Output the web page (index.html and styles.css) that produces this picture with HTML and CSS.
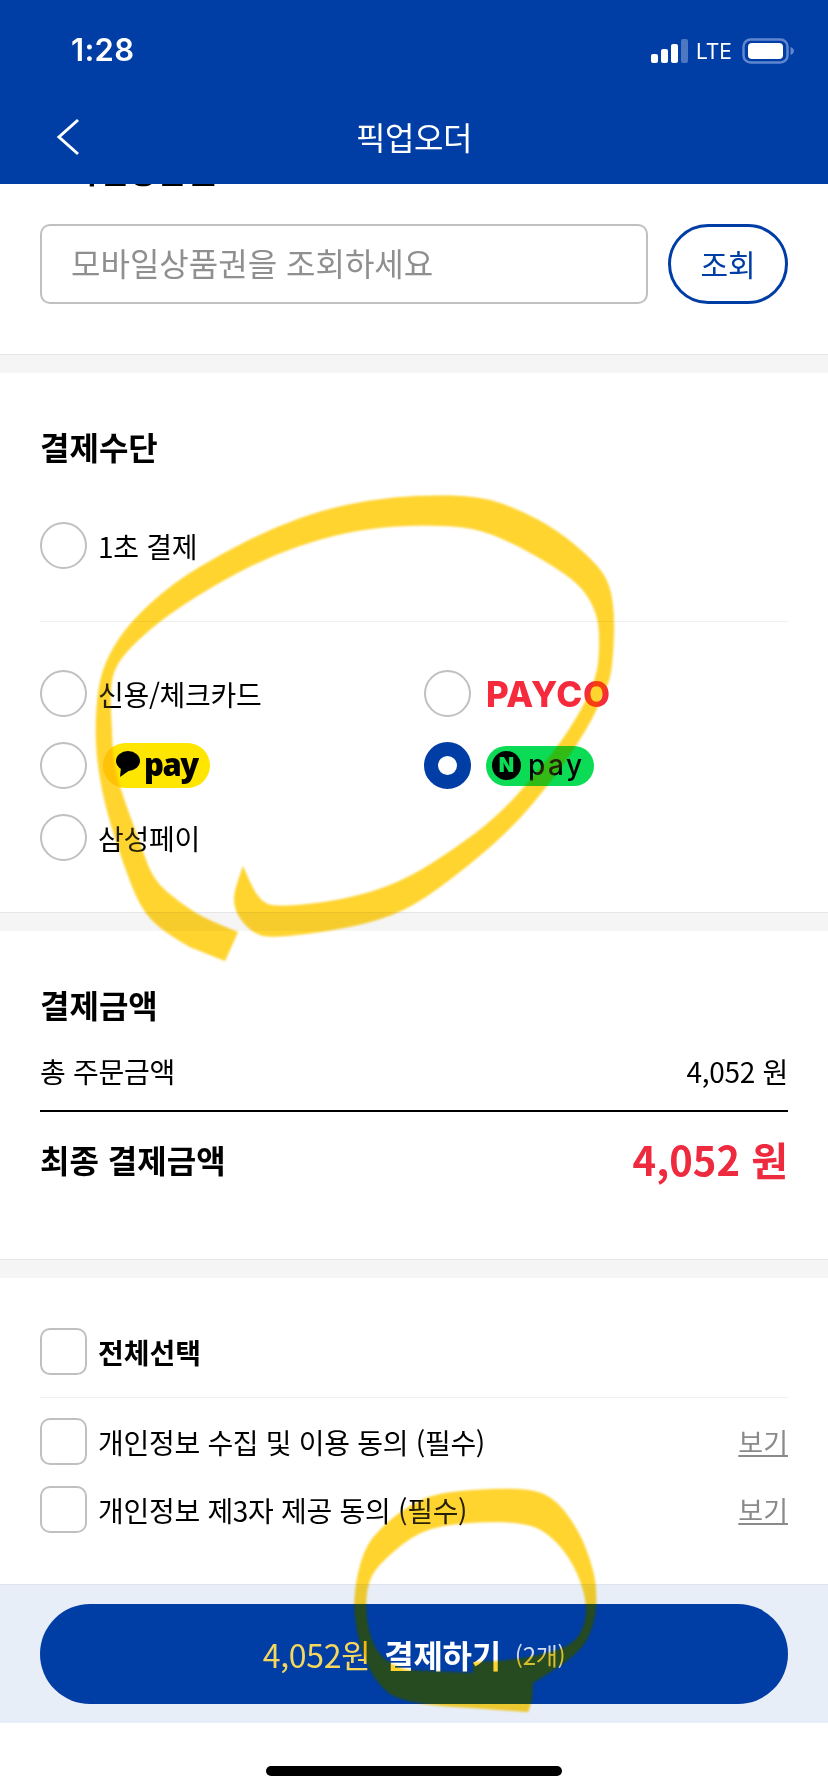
FILE: index.html
```html
<!DOCTYPE html>
<html lang="ko">
<head>
    <meta charset="UTF-8">
    <meta name="viewport" content="width=device-width, initial-scale=1.0">
    <title>픽업오더</title>
    <link rel="stylesheet" href="styles.css">
</head>
<body>
<div class="page">
    <header class="top">
        <div class="status">
            <span class="time">1:28</span>
            <div class="status-right">
                <svg class="signal" width="37" height="24" viewBox="0 0 37 24">
                    <rect x="0" y="15" width="7" height="9" rx="2" fill="#fff"/>
                    <rect x="10" y="10" width="7" height="14" rx="2" fill="#fff"/>
                    <rect x="20" y="5" width="7" height="19" rx="2" fill="#fff"/>
                    <rect x="30" y="0" width="7" height="24" rx="2" fill="#fff" opacity=".3"/>
                </svg>
                <span class="lte">LTE</span>
                <svg class="battery" width="52" height="26" viewBox="0 0 52 26">
                    <rect x="1.5" y="1.5" width="44" height="23" rx="7" fill="none" stroke="#5f86cf" stroke-width="2.5"/>
                    <rect x="6" y="5" width="35" height="16" rx="4" fill="#fff"/>
                    <path d="M48.5 9 C51 10 52 11.500 52 13 C52 14.500 51 16 48.500 17 Z" fill="#5f86cf"/>
                </svg>
            </div>
        </div>
        <nav class="nav">
            <svg class="back" width="24" height="38" viewBox="0 0 24 38">
                <path d="M22 2 L3 19 L22 36" fill="none" stroke="#fff" stroke-width="3"/>
            </svg>
            <h1>픽업오더</h1>
        </nav>
    </header>

    <section class="coupon">
        <h2 class="coupon-title">모바일상품권</h2>
        <div class="coupon-row">
            <div class="coupon-input">모바일상품권을 조회하세요</div>
            <button class="coupon-btn" type="button">조회</button>
        </div>
    </section>
    <div class="gap"></div>

    <section class="pay">
        <h2>결제수단</h2>
        <div class="opt opt-first"><span class="radio"></span>1초 결제</div>
        <div class="pay-grid">
            <div class="opt"><span class="radio"></span>신용/체크카드</div>
            <div class="opt"><span class="radio"></span><span class="payco">PAYCO</span></div>
            <div class="opt">
                <span class="radio"></span>
                <span class="kakao">
                    <svg width="24" height="26" viewBox="0 0 24 26">
                        <ellipse cx="12" cy="10" rx="12" ry="10" fill="#000"/>
                        <path d="M5 16 L4 26 L14 19 Z" fill="#000"/>
                    </svg>
                    pay
                </span>
            </div>
            <div class="opt">
                <span class="radio on"></span>
                <span class="npay"><span class="npay-n">N</span>pay</span>
            </div>
            <div class="opt"><span class="radio"></span>삼성페이</div>
        </div>
    </section>
    <div class="gap"></div>

    <section class="amount">
        <h2>결제금액</h2>
        <div class="amount-row"><span>총 주문금액</span><span>4,052 원</span></div>
        <div class="amount-final"><strong>최종 결제금액</strong><span class="final-price">4,052 원</span></div>
    </section>
    <div class="gap"></div>

    <section class="terms">
        <div class="opt opt-all"><span class="check"></span><strong>전체선택</strong></div>
        <div class="term"><div class="opt"><span class="check"></span>개인정보 수집 및 이용 동의 (필수)</div><a class="term-link">보기</a></div>
        <div class="term"><div class="opt"><span class="check"></span>개인정보 제3자 제공 동의 (필수)</div><a class="term-link">보기</a></div>
    </section>

    <footer class="foot">
        <button class="pay-btn" type="button">
            <span class="pay-sum">4,052원</span>
            <strong>결제하기</strong>
            <span class="pay-count">(2개)</span>
        </button>
    </footer>
    <div class="home"><span class="home-bar"></span></div>

    <!-- highlighter scribbles drawn over the screenshot -->
    <svg class="marker" width="828" height="1792" viewBox="0 0 828 1792">
        <defs>
            <filter id="soft" color-interpolation-filters="sRGB">
                <feGaussianBlur stdDeviation="1"/>
            </filter>
        </defs>
        <g id="scribbles" filter="url(#soft)" fill="#ffd42f">
            <path d="M225 961 L190 947 Q160 930 150 918 Q140 907 131.500 885 Q123 863 115 838 Q107 813 102.500 791.500 Q98 770 96.500 750 Q95 730 96.500 708.500 Q98 687 102.500 672 Q107 657 118.500 639.500 Q130 622 151.500 602.500 Q173 583 198 568 Q223 553 248 540.500 Q273 528 298 519 Q323 510 346.500 505 Q370 500 395 497.500 Q420 495 450 495.500 Q480 496 500 503 Q520 510 538.500 520 Q557 530 575 545 Q593 560 601.500 571.500 Q610 583 612.500 601.500 Q615 620 613.500 645 Q612 670 609.500 678.500 Q607 687 597 708.500 Q587 730 568.500 756.500 Q550 783 531.500 805 Q513 827 490 847 Q467 867 440 887 Q413 907 391.500 915 Q370 923 346.500 927.500 Q323 932 296.500 935 Q270 938 261.500 935.500 Q253 933 245.500 925 Q238 917 235.500 908.500 Q233 900 235 891.500 Q237 883 243 866 Q250 883 255 891.500 Q260 900 266.500 903.500 Q273 907 298 905 Q323 903 346.500 898 Q370 893 390 885 Q410 877 431.500 863.500 Q453 850 475 833.500 Q497 817 517 795 Q537 773 553.500 751.500 Q570 730 583.500 705 Q597 680 598.500 660 Q600 640 598.500 626.500 Q597 613 590 600.500 Q583 588 570 578 Q557 568 535 555.500 Q513 543 493 535 Q473 527 446.500 526 Q420 525 395 526.500 Q370 528 346.500 533 Q323 538 298 546.500 Q273 555 248 567.500 Q223 580 195 597.500 Q167 615 148.500 631 Q130 647 121.500 658.500 Q113 670 111.500 683.500 Q110 697 111 713.500 Q112 730 112.500 746.500 Q113 763 118 780 Q123 797 131.500 820 Q140 843 146.500 861.500 Q153 880 166.500 891.500 Q180 903 193.500 911.500 Q207 920 238 932 Z"/>
            <path fill-rule="evenodd" d="M528 1712 L473 1708 Q403 1705 388 1692.500 Q373 1680 365 1658.500 Q357 1637 355 1617 Q353 1597 358 1573.500 Q363 1550 373 1537.500 Q383 1525 401.500 1511.500 Q420 1498 440 1494 Q460 1490 495 1489 Q530 1488 543.500 1494 Q557 1500 568.500 1516.500 Q580 1533 586 1549 Q592 1565 594.500 1577.500 Q597 1590 596 1606.500 Q595 1623 587.500 1638 Q580 1653 556.500 1668 L533 1683 L532 1700 Z M497 1522 Q527 1522 540 1529.500 Q553 1537 563 1550 Q573 1563 579 1578 Q585 1593 586 1606.500 Q587 1620 580 1633.500 Q573 1647 545 1653.500 Q517 1660 495 1661 L473 1662 L473 1673 L407 1670 Q390 1665 381.500 1656 Q373 1647 369 1630 Q365 1613 366.500 1596.500 Q368 1580 375.500 1570 Q383 1560 401.500 1545 Q420 1530 443.500 1526 Q467 1522 497 1522 Z"/>
        </g>
    </svg>
    <svg class="marker-top" width="828" height="1792" viewBox="0 0 828 1792">
        <use href="#scribbles"/>
    </svg>
</div>
</body>
</html>
```

FILE: styles.css
```css
* {
    box-sizing: border-box;
}
body {
    margin: 0;
    background-color: #fff;
    font-family: "Noto Sans CJK KR", "Noto Sans", sans-serif;
    color: #000;
}
h1, h2 {
    margin: 0;
}
.page {
    position: relative;
    width: 828px;
    height: 1792px;
    overflow: hidden;
    display: flex;
    flex-direction: column;
}

/* header */
.top {
    position: relative;
    z-index: 1;
    height: 184px;
    flex: none;
    background-color: #003da5;
    color: #fff;
}
.status {
    height: 100px;
    padding: 36px 34px 0 71px;
    display: flex;
    justify-content: space-between;
    align-items: flex-start;
}
.time {
    font-family: Inter, sans-serif;
    font-size: 31px;
    font-weight: 600;
    letter-spacing: .3px;
    line-height: 28px;
}
.status-right {
    display: flex;
    align-items: center;
    gap: 10px;
    margin-top: 1px;
}
.lte {
    font-family: Inter, sans-serif;
    font-size: 21px;
    line-height: 26px;
    margin: 2px 0 0 -2px;
}
.nav {
    height: 84px;
    padding: 0 56px;
    display: grid;
    grid-template-columns: 1fr auto 1fr;
    align-items: center;
}
.nav h1 {
    font-size: 32px;
    font-weight: 400;
    letter-spacing: -.5px;
    margin-top: -12px;
}
.back {
    margin-top: -10px;
}

/* coupon */
.coupon {
    height: 170px;
    flex: none;
    padding: 0 40px;
}
.coupon-title {
    font-size: 32px;
    line-height: 32px;
    margin-top: -31px;
    margin-bottom: 39px;
}
.coupon-row {
    display: flex;
    gap: 20px;
}
.coupon-input {
    width: 608px;
    height: 80px;
    padding-left: 29px;
    border: 2px solid #c0c0c0;
    border-radius: 10px;
    font-size: 32px;
    line-height: 72px;
    color: #8f8f8f;
}
.coupon-btn {
    width: 120px;
    height: 80px;
    background-color: #fff;
    border: 3px solid #003da5;
    border-radius: 40px;
    font-family: inherit;
    font-size: 30px;
    padding: 0 0 3px;
    color: #003da5;
}
.gap {
    height: 19px;
    flex: none;
    background-color: #f5f5f5;
    border-top: 1px solid #e6e6e6;
}

/* options */
.opt {
    display: flex;
    align-items: center;
    gap: 11px;
    font-size: 28px;
    letter-spacing: -.3px;
    height: 47px;
}
.radio {
    flex: none;
    width: 47px;
    height: 47px;
    border: 2px solid #c0c0c0;
    border-radius: 50%;
}
.radio.on {
    border: 14px solid #003da5;
}
.check {
    flex: none;
    width: 47px;
    height: 47px;
    border: 2px solid #c0c0c0;
    border-radius: 10px;
}
.pay {
    height: 539px;
    flex: none;
    padding: 53px 40px 0;
}
.pay h2, .amount h2 {
    font-size: 32px;
    line-height: 40px;
}
.opt-first {
    margin-top: 56px;
}
.pay-grid {
    margin-top: 52px;
    padding-top: 48px;
    border-top: 1px solid #f0f0f0;
    display: grid;
    grid-template-columns: 384px 1fr;
    row-gap: 25px;
}
.payco {
    font-family: Inter, sans-serif;
    font-size: 35px;
    font-weight: 800;
    letter-spacing: .6px;
    color: #f52b3d;
    margin-left: 4px;
}
.kakao {
    display: flex;
    align-items: center;
    gap: 4px;
    height: 45px;
    width: 107px;
    padding: 0 0 3px 13px;
    margin-left: 5px;
    border-radius: 23px;
    background-color: #ffe600;
    font-family: "Open Sans", sans-serif;
    font-size: 31px;
    font-weight: 800;
    letter-spacing: -1.5px;
    line-height: 1;
}
.npay {
    display: flex;
    align-items: center;
    gap: 7px;
    height: 40px;
    width: 108px;
    padding: 0 0 2px 6px;
    margin-left: 4px;
    border-radius: 20px;
    background-color: #0cdc55;
    font-family: Inter, sans-serif;
    font-size: 28px;
    font-weight: 500;
    letter-spacing: 2.5px;
    line-height: 1;
}
.npay-n {
    width: 29px;
    height: 29px;
    border-radius: 50%;
    background-color: #000;
    color: #0cdc55;
    font-size: 20px;
    font-weight: 900;
    letter-spacing: 0;
    line-height: 29px;
    text-align: center;
    margin-top: 2px;
}

/* amount */
.amount {
    height: 328px;
    flex: none;
    padding: 53px 40px 0;
}
.amount-row {
    display: flex;
    justify-content: space-between;
    align-items: center;
    margin-top: 25px;
    padding-bottom: 18px;
    height: 63px;
    font-size: 28px;
    letter-spacing: -.3px;
    border-bottom: 2px solid #000;
}
.amount-final {
    display: flex;
    justify-content: space-between;
    align-items: center;
    margin-top: 21px;
    height: 52px;
}
.amount-final strong {
    font-size: 32px;
}
.final-price {
    font-size: 40px;
    font-weight: 700;
    color: #ee2a3f;
}

/* terms */
.terms {
    height: 306px;
    flex: none;
    padding: 50px 40px 0;
}
.opt-all {
    margin-bottom: 22px;
}
.opt-all strong {
    font-size: 28px;
    letter-spacing: 0;
}
.term {
    display: flex;
    justify-content: space-between;
    align-items: center;
    margin-bottom: 21px;
}
.opt-all + .term {
    border-top: 1px solid #f0f0f0;
    padding-top: 20px;
}
.term-link {
    font-size: 27px;
    color: #8a8a8a;
    text-decoration: underline;
}

/* bottom */
.foot {
    height: 139px;
    flex: none;
    padding: 19px 40px 0;
    background-color: #e8eef8;
    border-top: 1px solid #dfe4ec;
}
.pay-btn {
    width: 748px;
    height: 100px;
    display: flex;
    align-items: center;
    justify-content: center;
    gap: 14px;
    background-color: #003da5;
    border: none;
    border-radius: 50px;
    font-family: inherit;
    font-size: 32px;
    letter-spacing: -.3px;
    color: #fff;
}
.pay-sum {
    color: #f5d75e;
}
.pay-count {
    font-size: 24px;
    color: #d5def0;
}
.home {
    flex: 1;
    display: flex;
    justify-content: center;
    padding-top: 43px;
}
.home-bar {
    width: 296px;
    height: 10px;
    border-radius: 5px;
    background-color: #000;
}
.marker, .marker-top {
    position: absolute;
    z-index: 2;
    top: 0;
    left: 0;
    pointer-events: none;
}
.marker {
    mix-blend-mode: multiply;
}
.marker-top {
    opacity: .15;
}
```
